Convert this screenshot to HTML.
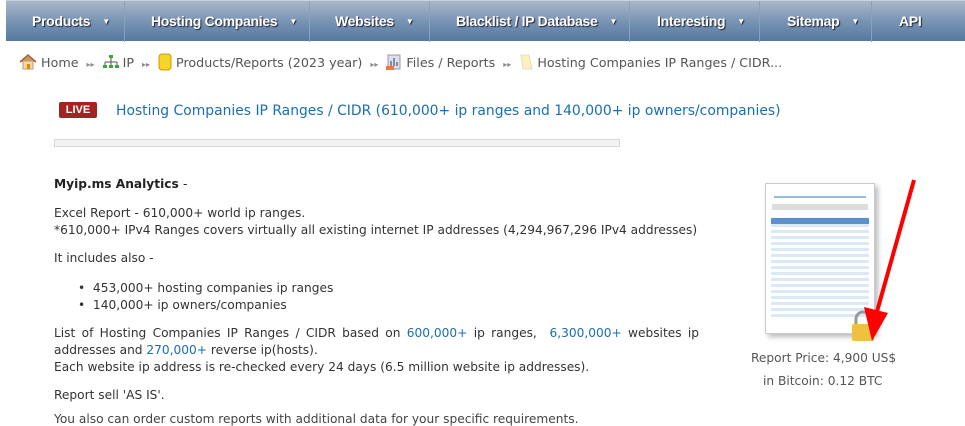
<!DOCTYPE html>
<html><head><meta charset="utf-8"><style>
*{margin:0;padding:0;box-sizing:border-box}
body{width:965px;height:420px;overflow:hidden;background:#fff;font-family:"DejaVu Sans",Verdana,sans-serif;font-size:12.2px;color:#333;position:relative}
.nav{position:absolute;left:6px;top:0;width:959px;height:41px;background:linear-gradient(#aab8ca,#7d97b6 45%,#55799f);border-top:1px solid #c8d2de}
.nav div{position:absolute;top:0;height:41px;line-height:40px;color:#fff;font-family:"Liberation Sans",Arial,sans-serif;font-weight:bold;font-size:14px;text-shadow:1px 1px 1px #223;letter-spacing:-0.3px;border-right:1px solid #8aa0bb}
.nav span.a{font-size:8px;margin-left:12px;position:relative;top:-2px}
.t{position:absolute;white-space:nowrap}
.bc{top:53px;color:#555;font-size:12.7px}
a{color:#1a6fb0;text-decoration:none}
.sep{color:#888;font-size:8px;margin:0 8px}
</style></head><body>
<div class="nav">
<div style="left:0;width:119px;padding-left:26px">Products<span class="a">▼</span></div>
<div style="left:119px;width:185px;padding-left:26px">Hosting Companies<span class="a">▼</span></div>
<div style="left:304px;width:120px;padding-left:25px">Websites<span class="a">▼</span></div>
<div style="left:424px;width:200px;padding-left:26px">Blacklist / IP Database<span class="a">▼</span></div>
<div style="left:624px;width:130px;padding-left:27px">Interesting<span class="a">▼</span></div>
<div style="left:754px;width:112px;padding-left:27px">Sitemap<span class="a">▼</span></div>
<div style="left:866px;width:93px;padding-left:27px;border-right:none">API</div>
</div>
<div class="t bc" style="left:19px">
<svg width="18" height="16" style="vertical-align:-3px"><path d="M1 8 L9 1 L17 8" fill="#c96" stroke="#a63" stroke-width="1.5"/><rect x="4" y="7" width="10" height="8" fill="#f3d9a0" stroke="#b98"/><rect x="8" y="10" width="3" height="5" fill="#d80"/></svg>
Home<span class="sep">▸▸</span><svg width="16" height="14" style="vertical-align:-2px"><rect x="6" y="0" width="4" height="3" fill="#3a3"/><path d="M8 3v4M2 7h12M2 7v3M8 7v3M14 7v3" stroke="#555" fill="none"/><rect x="0" y="10" width="4" height="3" fill="#3a3"/><rect x="6" y="10" width="4" height="3" fill="#3a3"/><rect x="12" y="10" width="4" height="3" fill="#3a3"/></svg> IP<span class="sep">▸▸</span><svg width="14" height="18" style="vertical-align:-4px"><rect x="1" y="1" width="12" height="16" rx="3" fill="#f7d42a" stroke="#c90"/></svg> Products/Reports (2023 year)<span class="sep">▸▸</span><svg width="16" height="16" style="vertical-align:-3px"><rect x="2" y="1" width="12" height="14" fill="#dde" stroke="#99a"/><path d="M5 12V7M8 12V4M11 12V8" stroke="#678" stroke-width="1.5"/><rect x="0" y="12" width="8" height="4" fill="#e74"/></svg> Files / Reports<span class="sep">▸▸</span><svg width="14" height="18" style="vertical-align:-4px"><path d="M2 2h8l3 14H4z" fill="#faf2b8" stroke="#ddc"/></svg> Hosting Companies IP Ranges / CIDR...</div>
<div class="t" style="left:59px;top:102px;width:38px;height:16px;background:#a32323;color:#fff;font-weight:bold;font-size:11px;text-align:center;line-height:16px;border-radius:2px;font-family:'Liberation Sans',sans-serif">LIVE</div>
<div class="t" style="left:116px;top:103px;font-size:13.9px;color:#1a6fb0">Hosting Companies IP Ranges / CIDR (610,000+ ip ranges and 140,000+ ip owners/companies)</div>
<div class="t" style="left:54px;top:139px;width:566px;height:8px;background:#f2f2f2;border:1px solid #d8d8d8"></div>
<div class="t" style="left:54px;top:177px;font-weight:bold;color:#222">Myip.ms Analytics <span style="font-weight:normal">-</span></div>
<div class="t" style="left:54px;top:205px;line-height:17px">Excel Report - 610,000+ world ip ranges.<br>*610,000+ IPv4 Ranges covers virtually all existing internet IP addresses (4,294,967,296 IPv4 addresses)</div>
<div class="t" style="left:54px;top:251px">It includes also -</div>
<div class="t" style="left:78px;top:280px;line-height:17px">•&nbsp;&nbsp;453,000+ hosting companies ip ranges<br>•&nbsp;&nbsp;140,000+ ip owners/companies</div>
<div class="t" style="left:54px;top:325px;line-height:17px;width:645px;white-space:normal;text-align:justify">List of Hosting Companies IP Ranges / CIDR based on <a>600,000+</a> ip ranges,&nbsp; <a>6,300,000+</a> websites ip addresses and <a>270,000+</a> reverse ip(hosts).<br>Each website ip address is re-checked every 24 days (6.5 million website ip addresses).</div>
<div class="t" style="left:54px;top:388px">Report sell 'AS IS'.</div>
<div class="t" style="left:765px;top:183px;width:110px;height:151px;border:1px solid #ccc;background:#fff;box-shadow:3px 3px 5px #bbb">
<div style="margin:12px 8px 0;height:2px;background:#9bd"></div>
<div style="margin:6px 6px 0;height:6px;background:#ddd"></div>
<div style="margin:8px 5px 0;height:100px;background:repeating-linear-gradient(#dbe8f5 0 3px,#fff 3px 6px);border-top:6px solid #5b8fd0"></div>
</div>
<svg class="t" style="left:848px;top:310px" width="30" height="32"><path d="M8 14V9a7 7 0 0 1 14 0v5" fill="none" stroke="#999" stroke-width="3"/><rect x="4" y="14" width="22" height="17" rx="2" fill="#f0c040"/></svg>
<svg class="t" style="left:850px;top:175px" width="70" height="170"><path d="M64 5 L26 140" stroke="#f00" stroke-width="4"/><path d="M14 132 L22 166 L38 138 Z" fill="#f00"/></svg>
<div class="t" style="left:751px;top:351px;color:#555">Report Price: 4,900 US$</div>
<div class="t" style="left:763px;top:374px;color:#555">in Bitcoin: 0.12 BTC</div>
<div class="t" style="left:54px;top:412px;color:#444">You also can order custom reports with additional data for your specific requirements.</div>
</body></html>
